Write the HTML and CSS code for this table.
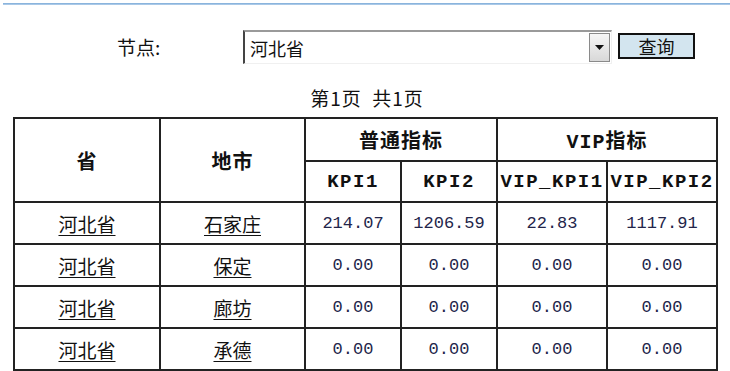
FILE: index.html
```html
<!DOCTYPE html>
<html lang="zh-CN">
<head>
<meta charset="utf-8">
<title>KPI</title>
<link rel="stylesheet" href="styles.css">
</head>
<body>
<div class="topline"></div>
<div class="filter">
  <label class="filter-label">节点:</label>
  <div class="select">
    <span class="select-text">河北省</span>
    <span class="select-arrow"><svg width="9" height="5" viewBox="0 0 9 5"><path d="M0 0H9L4.5 5Z" fill="#111"/></svg></span>
  </div>
  <button class="btn">查询</button>
</div>
<div class="pager">第1页&nbsp;&nbsp;共1页</div>
<table class="grid">
  <colgroup>
    <col class="c-prov"><col class="c-city"><col class="c-k"><col class="c-k"><col class="c-v"><col class="c-v">
  </colgroup>
  <thead>
    <tr class="h1">
      <th rowspan="2" class="cjk">省</th>
      <th rowspan="2" class="cjk">地市</th>
      <th colspan="2" class="cjk">普通指标</th>
      <th colspan="2" class="mix">VIP指标</th>
    </tr>
    <tr class="h2">
      <th class="mono">KPI1</th>
      <th class="mono">KPI2</th>
      <th class="mono">VIP_KPI1</th>
      <th class="mono">VIP_KPI2</th>
    </tr>
  </thead>
  <tbody>
    <tr><td class="link">河北省</td><td class="link">石家庄</td><td class="num">214.07</td><td class="num">1206.59</td><td class="num">22.83</td><td class="num">1117.91</td></tr>
    <tr><td class="link">河北省</td><td class="link">保定</td><td class="num">0.00</td><td class="num">0.00</td><td class="num">0.00</td><td class="num">0.00</td></tr>
    <tr><td class="link">河北省</td><td class="link">廊坊</td><td class="num">0.00</td><td class="num">0.00</td><td class="num">0.00</td><td class="num">0.00</td></tr>
    <tr><td class="link">河北省</td><td class="link">承德</td><td class="num">0.00</td><td class="num">0.00</td><td class="num">0.00</td><td class="num">0.00</td></tr>
  </tbody>
</table>
</body>
</html>
```

FILE: styles.css
```css
html, body {
  margin: 0;
  padding: 0;
  background: #fff;
}
body {
  width: 730px;
  font-family: "Noto Sans CJK SC", "Liberation Sans", sans-serif;
  color: #111;
}
.topline {
  margin: 3px 0 0 3px;
  height: 2px;
  background: linear-gradient(#7aaad8, #b9d3ec);
}
.filter {
  display: flex;
  align-items: center;
  margin-top: 25px;
  height: 34px;
}
.filter-label {
  width: 126px;
  margin-left: 117px;
  font-size: 19px;
  line-height: 22px;
}
.select {
  box-sizing: border-box;
  width: 369px;
  height: 34px;
  display: flex;
  align-items: center;
  justify-content: space-between;
  border-left: 2px solid #444;
  border-top: 2px solid #9a9a9a;
  border-right: 1px solid #f0f0f0;
  border-bottom: 1px solid #f0f0f0;
  background: #fff;
}
.select-text {
  padding-left: 5px;
  font-size: 18px;
  line-height: 22px;
}
.select-arrow {
  box-sizing: border-box;
  width: 21px;
  height: 29px;
  margin-right: 1px;
  display: flex;
  align-items: center;
  justify-content: center;
  border: 1px solid #8a8a8a;
  background: linear-gradient(#f6f6f6, #d8d8d8);
}
.btn {
  box-sizing: border-box;
  align-self: flex-start;
  width: 77px;
  height: 26px;
  margin: 3px 0 0 6px;
  padding: 0;
  border: 2px solid #111;
  background: #d3e5ef;
  font-family: "Noto Sans CJK SC", sans-serif;
  font-size: 18px;
  line-height: 20px;
  color: #111;
}
.pager {
  margin-top: 23px;
  text-align: center;
  font-size: 19px;
  line-height: 22px;
  letter-spacing: 1px;
  padding-left: 4px;
}
.grid {
  margin: 8px 0 0 13px;
  width: 704px;
  table-layout: fixed;
  border-collapse: collapse;
  border: 2px solid #222;
}
.c-prov { width: 146px; }
.c-city { width: 145px; }
.c-k { width: 96px; }
.c-v { width: 110px; }
.grid th, .grid td {
  border: 2px solid #222;
  padding: 0;
  text-align: center;
  white-space: nowrap;
  overflow: hidden;
}
.grid tr.h1 { height: 43px; }
.grid tr.h2 { height: 41px; }
.grid tbody tr { height: 42px; }
.cjk {
  font-family: "Noto Sans CJK SC", sans-serif;
  font-weight: 700;
  font-size: 20px;
  letter-spacing: 1px;
}
.mix {
  font-family: "Liberation Mono", "Noto Sans CJK SC", monospace;
  font-weight: 700;
  font-size: 20px;
  letter-spacing: 1px;
}
.mono {
  font-family: "Liberation Mono", monospace;
  font-weight: 700;
  font-size: 19px;
  letter-spacing: 1.5px;
}
.link {
  font-family: "Noto Sans CJK SC", sans-serif;
  font-size: 19px;
  text-decoration: underline;
  text-underline-offset: 3px;
  color: #111;
}
.num {
  font-family: "Liberation Mono", monospace;
  font-size: 17px;
  color: #23254a;
}
```
